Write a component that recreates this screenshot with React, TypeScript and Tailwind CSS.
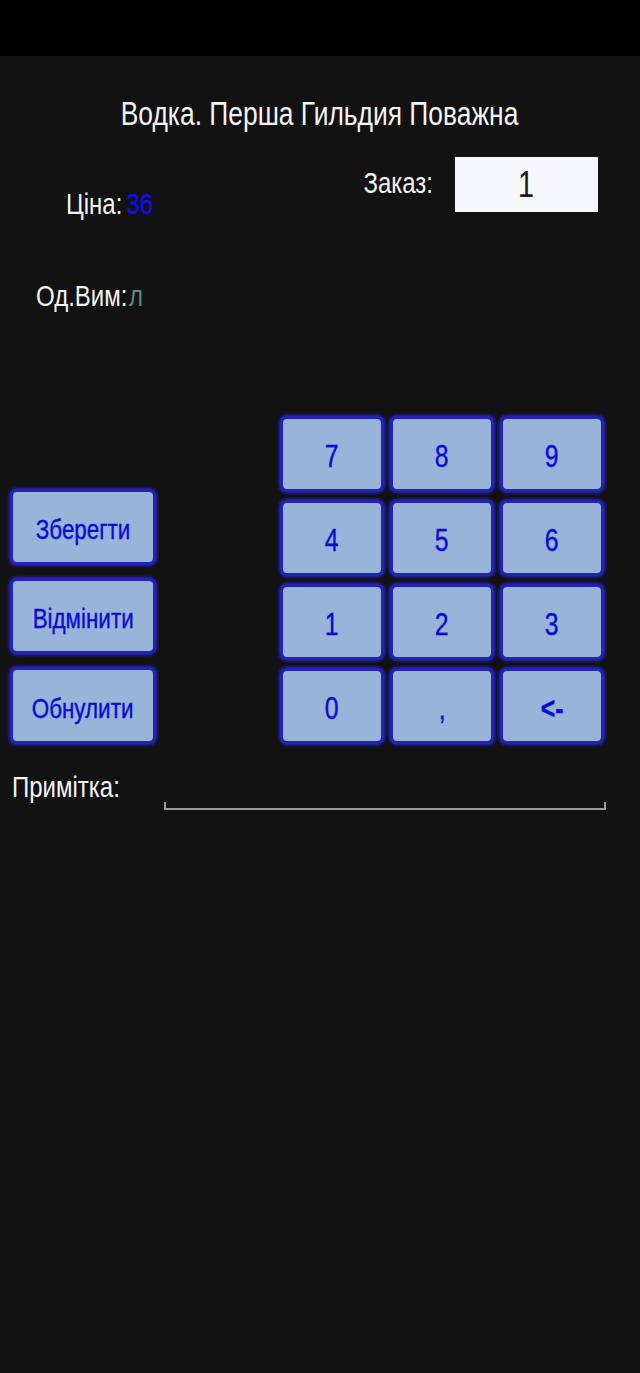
import React, { useState } from 'react';

const font = { fontFamily: '"Liberation Sans Narrow", "Liberation Sans", Arial, sans-serif' };

const keys = ['7', '8', '9', '4', '5', '6', '1', '2', '3', '0', ',', '<-'];

// the app font is a condensed one, squeeze Liberation Sans to match
const Narrow: React.FC<{ children: React.ReactNode; className?: string }> = ({ children, className }) => (
    <span className={`inline-block scale-x-[0.8] whitespace-nowrap ${className ?? 'origin-center'}`}>{children}</span>
);

const KeyButton: React.FC<{ label: string; className?: string; textClass?: string }> = ({ label, className, textClass }) => (
    <button
        className={`flex items-center justify-center rounded-[7px] border-[3px] border-[#2222b4] bg-[#98b5d9] pt-[6px] shadow-[0_0_3px_1px_#2626d8] ${className ?? ''}`}
    >
        <Narrow className={`origin-center text-[#0a0ad8] [-webkit-text-stroke:0.4px_#0a0ad8] ${textClass ?? 'text-[30px]'}`}>
            {label}
        </Narrow>
    </button>
);

export default function App() {
    const [order] = useState('1');

    return (
        <div className="min-h-[1373px] w-[640px] bg-[#121212] text-[#f4f4f4]" style={font}>
            <div className="h-[56px] bg-black" />

            <h1 className="pt-[38px] text-center text-[33px] leading-[40px]">
                <Narrow>Водка. Перша Гильдия Поважна</Narrow>
            </h1>

            <div className="mt-[23px] flex">
                <div className="ml-[66px] mt-[27px] text-[30px] leading-[40px]">
                    <Narrow className="origin-left">
                        Ціна:<span className="ml-[5px] text-[#1010e0] [-webkit-text-stroke:0.5px_#1010e0]">36</span>
                    </Narrow>
                </div>
                <div className="ml-auto mr-[42px] flex items-start">
                    <span className="mt-[6px] text-[30px] leading-[40px]">
                        <Narrow className="origin-right">Заказ:</Narrow>
                    </span>
                    <div className="ml-[22px] flex h-[55px] w-[143px] items-center justify-center bg-[#f6f7fb] text-[36px] text-[#1a1a1a]">
                        <Narrow>{order}</Narrow>
                    </div>
                </div>
            </div>

            <div className="ml-[36px] mt-[52px] text-[30px] leading-[40px]">
                <Narrow className="origin-left">
                    Од.Вим:<span className="ml-[2px] text-[#5e8c82]">л</span>
                </Narrow>
            </div>

            <div className="mt-[100px] flex items-end">
                <div className="ml-[10px] flex w-[146px] flex-col gap-[13px]">
                    <KeyButton label="Зберегти" className="h-[76px]" textClass="text-[28px]" />
                    <KeyButton label="Відмінити" className="h-[76px]" textClass="text-[28px]" />
                    <KeyButton label="Обнулити" className="h-[77px]" textClass="text-[28px]" />
                </div>
                <div className="ml-[124px] grid grid-cols-[104px_104px_104px] gap-x-[6px] gap-y-[8px]">
                    {keys.map((k) => (
                        <KeyButton
                            key={k}
                            label={k}
                            className="h-[76px]"
                            textClass={k === '<-' ? 'text-[31px] font-bold' : 'text-[31px]'}
                        />
                    ))}
                </div>
            </div>

            <div className="mt-[24px] flex items-start">
                <span className="ml-[12px] w-[152px] text-[30px] leading-[38px]">
                    <Narrow className="origin-left">Примітка:</Narrow>
                </span>
                <div className="mt-[34px] h-[8px] w-[442px] border-x-2 border-b-2 border-[#9a9a9a]" />
            </div>
        </div>
    );
}
